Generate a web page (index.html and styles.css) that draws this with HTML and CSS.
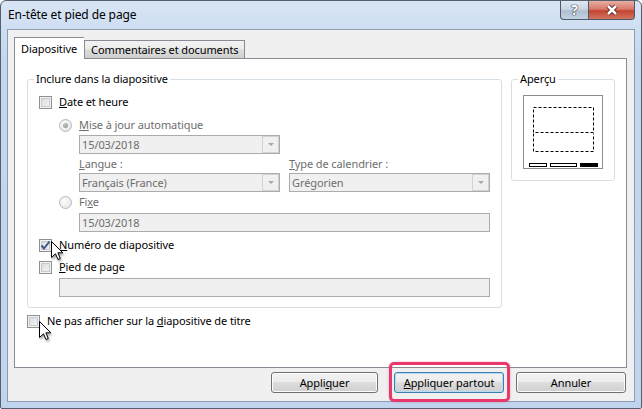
FILE: index.html
```html
<!DOCTYPE html>
<html lang="fr">
<head>
    <meta charset="UTF-8">
    <meta name="viewport" content="width=device-width, initial-scale=1.0">
    <title>En-tête et pied de page</title>
    <link rel="stylesheet" href="styles.css">
</head>
<body>
    <div class="window">
        <div class="titlebar">
            <span class="title">En-tête et pied de page</span>
            <div class="caption">
                <span class="cap help">?</span>
                <span class="cap close">
                    <svg width="14" height="12" viewBox="0 0 14 12">
                        <path class="x-out" d="M3 2 L11 10 M11 2 L3 10"/>
                        <path class="x-in" d="M3 2 L11 10 M11 2 L3 10"/>
                    </svg>
                </span>
            </div>
        </div>

        <div class="client">
            <div class="tabs">
                <div class="tab active">Diapositive</div>
                <div class="tab">Commentaires et documents</div>
            </div>

            <div class="panel">
                <div class="groups">
                    <fieldset class="group include">
                        <legend>Inclure dans la diapositive</legend>
                        <div class="row r-date"><span class="check"></span><span class="txt"><u>D</u>ate et heure</span></div>
                        <div class="row r-auto"><span class="radio on"></span><span class="txt dim"><u>M</u>ise à jour automatique</span></div>
                        <div class="combo c-date"><span>15/03/2018</span><i class="drop"></i></div>
                        <div class="pair labels">
                            <span class="dim lbl-lang"><u>L</u>angue :</span>
                            <span class="dim"><u>T</u>ype de calendrier :</span>
                        </div>
                        <div class="pair combos">
                            <div class="combo"><span>Français (France)</span><i class="drop"></i></div>
                            <div class="combo"><span>Grégorien</span><i class="drop"></i></div>
                        </div>
                        <div class="row r-fixe"><span class="radio"></span><span class="txt dim">Fi<u>x</u>e</span></div>
                        <div class="field f-fixe">15/03/2018</div>
                        <div class="row r-num">
                            <span class="check">
                                <svg width="11" height="11" viewBox="0 0 11 11"><path d="M1.5 5.5 L4 8.5 L9.5 1.5" /></svg>
                            </span>
                            <span class="txt"><u>N</u>uméro de diapositive</span>
                        </div>
                        <div class="row r-pied"><span class="check"></span><span class="txt"><u>P</u>ied de page</span></div>
                        <div class="field f-pied"></div>
                    </fieldset>

                    <fieldset class="group preview">
                        <legend>Aperçu</legend>
                        <div class="thumb">
                            <svg width="78" height="72" viewBox="0 0 78 72">
                                <rect class="dash" x="9.5" y="11.5" width="60" height="25"/>
                                <path class="dash" d="M9.5 37.5 V55.5 H69.5 V37.5"/>
                                <rect class="bar" x="5.5" y="67.5" width="17" height="3"/>
                                <rect class="bar" x="26.5" y="67.5" width="26" height="3"/>
                                <rect class="bar full" x="56" y="67" width="18" height="4"/>
                            </svg>
                        </div>
                    </fieldset>
                </div>
                <div class="row r-title"><span class="check"></span><span class="txt">Ne pas afficher sur la <u>d</u>iapositive de titre</span></div>
            </div>

            <div class="buttons">
                <button class="btn b-apply">Appli<u>q</u>uer</button>
                <span class="hl"><button class="btn default"><u>A</u>ppliquer partout</button></span>
                <button class="btn b-cancel">Annuler</button>
            </div>
        </div>

        <svg class="cursor cur1" width="13" height="20" viewBox="0 0 13 20"><path d="M0.5 0.5 L0.5 16.5 L4.5 12.8 L7 18.5 L9.3 17.5 L6.9 11.8 L11.8 11.8 Z"/></svg>
        <svg class="cursor cur2" width="13" height="20" viewBox="0 0 13 20"><path d="M0.5 0.5 L0.5 16.5 L4.5 12.8 L7 18.5 L9.3 17.5 L6.9 11.8 L11.8 11.8 Z"/></svg>
    </div>
</body>
</html>
```

FILE: styles.css
```css
body{
    margin: 0;
    font-family: "Noto Sans", "Open Sans", sans-serif;
    font-size: 11px;
    letter-spacing: -0.1px;
    line-height: 16px;
    color: #000;
}
.window{
    position: relative;
    box-sizing: border-box;
    width: 642px;
    height: 409px;
    border: 1px solid #55606e;
    border-radius: 6px 6px 2px 2px;
    background: linear-gradient(to bottom, #d8e5f4, #c3d7ee 60px, #c0d5ed);
    display: flex;
    flex-direction: column;
}
.titlebar{
    height: 28px;
    display: flex;
    justify-content: space-between;
    align-items: flex-start;
}
.title{
    padding: 6px 0 0 7px;
    font-size: 12px;
    letter-spacing: -0.1px;
}
.caption{
    display: flex;
    margin-right: 6px;
}
.cap{
    box-sizing: border-box;
    height: 19px;
    border: 1px solid #4d5a6b;
    border-top: none;
    display: flex;
    justify-content: center;
    align-items: center;
}
.help{
    width: 28px;
    border-right: none;
    border-radius: 0 0 0 4px;
    background: linear-gradient(to bottom, #dfe8f2, #c9d6e4 45%, #aebfd2 55%, #c2d2e2);
    color: #fff;
    font-weight: bold;
    font-size: 14px;
    text-shadow: 0 0 1px #2b3442, 0 0 1px #2b3442, 0 0 1px #2b3442;
}
.close{
    width: 47px;
    border-radius: 0 0 4px 0;
    background: linear-gradient(to bottom, #e9aea3, #d77a69 45%, #c24530 55%, #d4745f);
}
.x-out{
    stroke: #5a2018;
    stroke-width: 4.5;
    fill: none;
}
.x-in{
    stroke: #fff;
    stroke-width: 2.5;
    fill: none;
}
.client{
    box-sizing: border-box;
    height: 373px;
    margin: 0 6px;
    border: 1px solid #8c9db2;
    background: #f0f0f0;
    padding: 7px 7px 0 6px;
    display: flex;
    flex-direction: column;
}
.tabs{
    display: flex;
    align-items: flex-end;
    height: 21px;
}
.tab{
    box-sizing: border-box;
    height: 18px;
    padding: 0 6px;
    border: 1px solid #898c95;
    border-bottom: none;
    line-height: 17px;
    background: linear-gradient(to bottom, #f2f2f2, #ebebeb 50%, #dddddd 50%, #cfcfcf);
}
.tab.active{
    position: relative;
    z-index: 1;
    height: 22px;
    margin-bottom: -1px;
    border-right: none;
    padding: 2px 7px 0 6px;
    background: #fff;
}
.panel{
    box-sizing: border-box;
    height: 310px;
    border: 1px solid #898c95;
    background: #fff;
    padding: 12px 12px 0 12px;
}
.groups{
    display: flex;
    align-items: flex-start;
}
.group{
    box-sizing: border-box;
    margin: 0;
    border: 1px solid #d5dfe5;
    border-radius: 3px;
    padding: 7px 11px 10px 11px;
}
.group legend{
    margin-left: -5px;
    padding: 0 2px;
    line-height: 16px;
}
.include{
    width: 475px;
}
.preview{
    width: 104px;
    margin-left: 9px;
    padding: 8px 11px 11px 11px;
}
.thumb{
    width: 80px;
    height: 74px;
    box-sizing: border-box;
    border: 1px solid #8c8c8c;
}
.thumb svg{
    display: block;
}
.dash{
    fill: none;
    stroke: #000;
    stroke-dasharray: 3 2;
}
.bar{
    fill: #fff;
    stroke: #000;
}
.bar.full{
    fill: #000;
    stroke: none;
}
.row{
    display: flex;
    align-items: center;
    height: 16px;
}
.txt{
    margin-left: 7px;
}
.dim{
    color: #6d6d6d;
}
.check{
    box-sizing: border-box;
    width: 13px;
    height: 13px;
    border: 1px solid #8e8f8f;
    background: linear-gradient(135deg, #d7d9dc, #f7f7f7);
    box-shadow: inset 0 0 0 1px #f4f4f4, inset 0 0 0 2px #c6c9ce;
    display: flex;
    justify-content: center;
    align-items: center;
}
.check path{
    fill: none;
    stroke: #3f5890;
    stroke-width: 2;
}
.radio{
    box-sizing: border-box;
    width: 13px;
    height: 13px;
    border: 1px solid #b8b8b8;
    border-radius: 50%;
    background: radial-gradient(circle at 40% 35%, #fcfcfc, #e2e2e2);
    display: flex;
    justify-content: center;
    align-items: center;
}
.radio.on::after{
    content: "";
    width: 5px;
    height: 5px;
    border-radius: 50%;
    background: radial-gradient(circle at 40% 35%, #c8c8c8, #8a8a8a);
}
.r-auto{
    margin-top: 7px;
    padding-left: 20px;
}
.combo{
    box-sizing: border-box;
    width: 201px;
    height: 19px;
    border: 1px solid #acacac;
    background: #f0f0f0;
    color: #6d6d6d;
    display: flex;
    align-items: center;
    padding-left: 2px;
}
.combo span{
    flex: 1;
}
.drop{
    box-sizing: border-box;
    width: 17px;
    height: 17px;
    border: 1px solid #d2d2d2;
    display: flex;
    justify-content: center;
    align-items: center;
}
.drop::after{
    content: "";
    border-left: 3px solid transparent;
    border-right: 3px solid transparent;
    border-top: 3px solid #a6a6a6;
}
.c-date{
    margin: 2px 0 0 40px;
}
.pair{
    display: flex;
    margin-left: 40px;
    gap: 9px;
}
.labels{
    margin-top: 2px;
    height: 16px;
}
.lbl-lang{
    width: 201px;
}
.combos{
    margin-top: 1px;
}
.r-fixe{
    margin-top: 2px;
    padding-left: 20px;
}
.field{
    box-sizing: border-box;
    height: 19px;
    border: 1px solid #acacac;
    background: #f0f0f0;
    color: #6d6d6d;
    padding-left: 2px;
    line-height: 17px;
}
.f-fixe{
    margin: 3px 0 0 40px;
    width: 411px;
}
.r-num{
    margin-top: 5px;
}
.r-pied{
    margin-top: 6px;
}
.f-pied{
    margin: 3px 0 0 20px;
    width: 431px;
}
.r-title{
    margin-top: 5px;
}
.buttons{
    display: flex;
    justify-content: flex-end;
    margin-top: 4px;
    padding-right: 1px;
}
.btn{
    box-sizing: border-box;
    height: 21px;
    border: 1px solid #707070;
    border-radius: 3px;
    background: linear-gradient(to bottom, #f2f2f2, #ebebeb 50%, #dddddd 50%, #cfcfcf);
    box-shadow: inset 0 0 0 1px #fcfcfc;
    font: inherit;
    letter-spacing: inherit;
    color: #000;
    padding: 0;
}
.b-apply{
    width: 107px;
}
.hl{
    position: relative;
    display: flex;
    margin: 0 12px 0 16px;
}
.hl::after{
    content: "";
    position: absolute;
    top: -10px;
    bottom: -9px;
    left: -5px;
    right: -6px;
    border: 3px solid #e8386c;
    border-radius: 5px;
    box-shadow: 0 0 2px rgba(232, 56, 108, 0.5);
}
.default{
    width: 110px;
    border-color: #3c7fb1;
    box-shadow: inset 0 0 0 1px #b6dcf3;
}
.b-cancel{
    width: 110px;
}
.cursor{
    position: absolute;
    filter: drop-shadow(1px 2px 1px rgba(0, 0, 0, 0.35));
}
.cursor path{
    fill: #fff;
    stroke: #000;
    stroke-width: 1;
}
.cur1{
    left: 50px;
    top: 240px;
}
.cur2{
    left: 38px;
    top: 320px;
}
```
